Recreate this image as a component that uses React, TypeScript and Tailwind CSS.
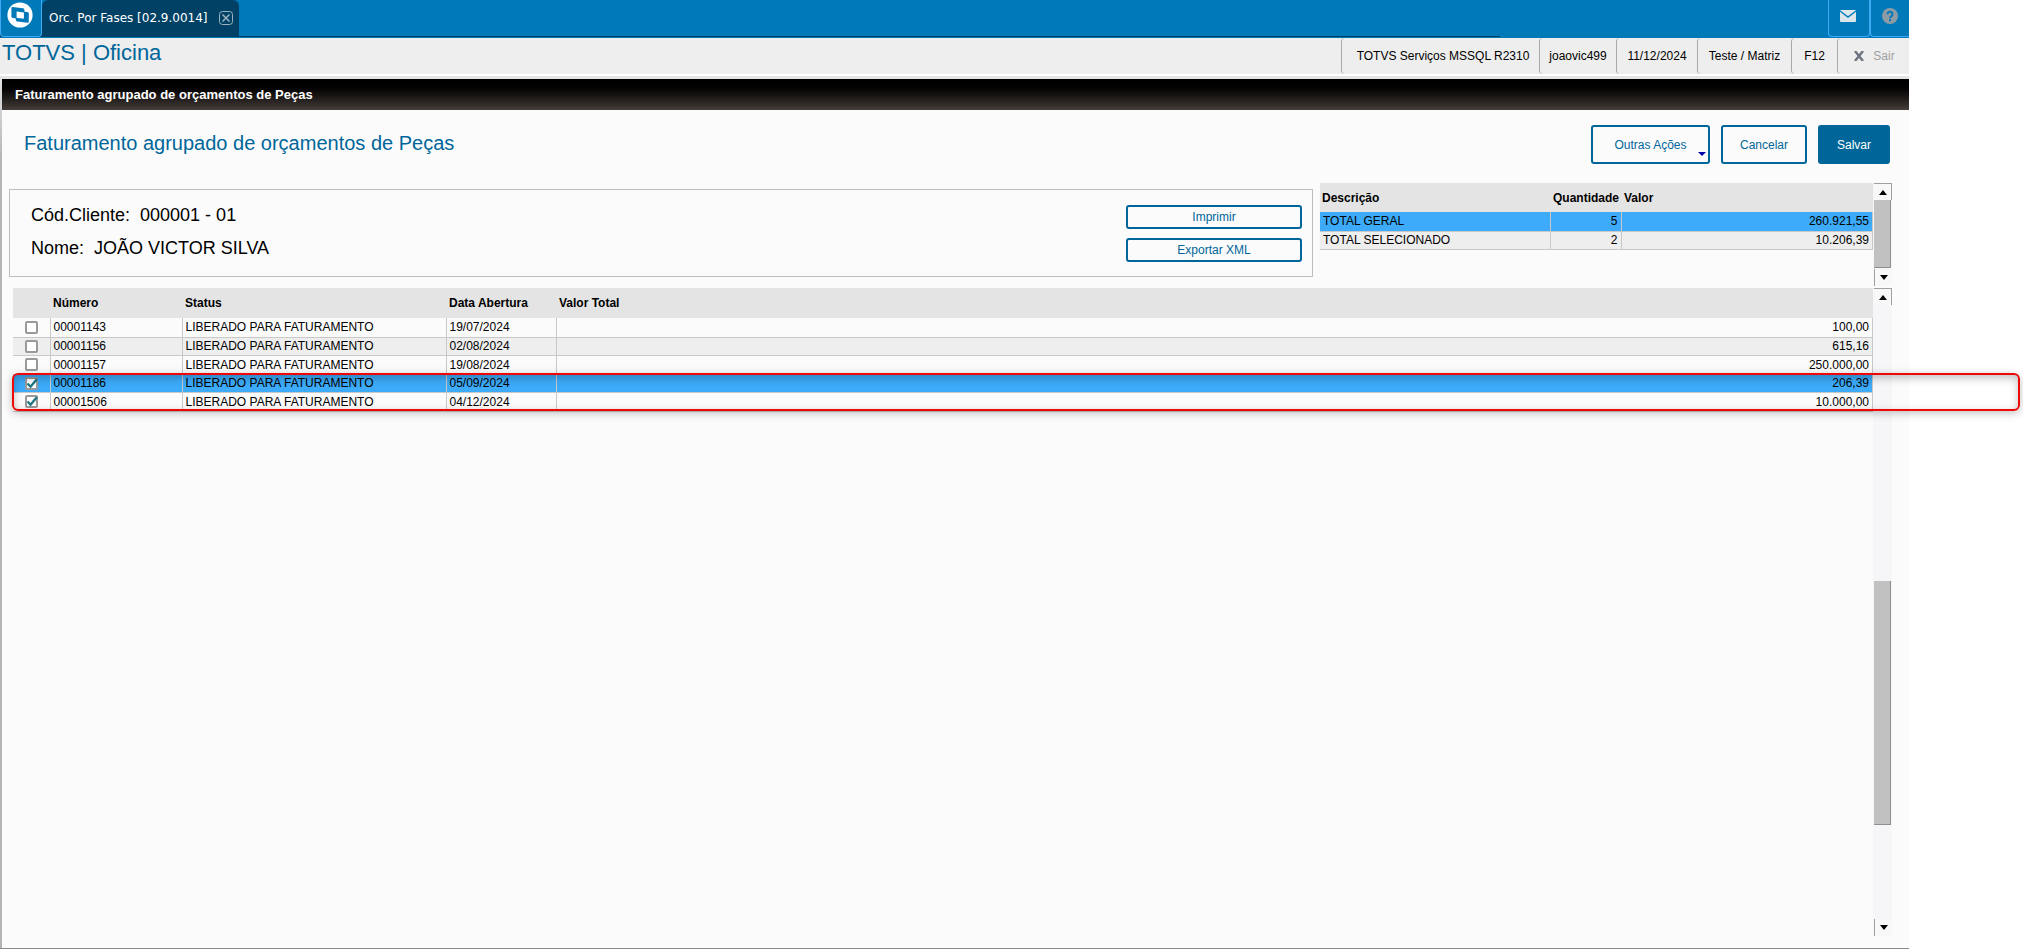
import React from 'react';

interface Order {
  number: string;
  status: string;
  date: string;
  value: string;
  checked: boolean;
  active?: boolean;
}

const ORDERS: Order[] = [
  { number: '00001143', status: 'LIBERADO PARA FATURAMENTO', date: '19/07/2024', value: '100,00', checked: false },
  { number: '00001156', status: 'LIBERADO PARA FATURAMENTO', date: '02/08/2024', value: '615,16', checked: false },
  { number: '00001157', status: 'LIBERADO PARA FATURAMENTO', date: '19/08/2024', value: '250.000,00', checked: false },
  { number: '00001186', status: 'LIBERADO PARA FATURAMENTO', date: '05/09/2024', value: '206,39', checked: true, active: true },
  { number: '00001506', status: 'LIBERADO PARA FATURAMENTO', date: '04/12/2024', value: '10.000,00', checked: true },
];

const TOTALS = [
  { label: 'TOTAL GERAL', count: 5, value: '260.921,55', active: true },
  { label: 'TOTAL SELECIONADO', count: 2, value: '10.206,39', active: false },
];

const Logo = () => (
  <svg className="h-[26px] w-[26px]" viewBox="0 0 26 26">
    <circle cx="13" cy="13" r="12.6" fill="#fff" />
    <path d="M5.500 5l10.500 1.200a1.500 1.500 0 0 1 1.400 1.500v9.800L5.800 16a1.500 1.500 0 0 1-1.400-1.500V6a1 1 0 0 1 1.100-1z" fill="#0079b8" />
    <path d="M8.800 8.800l11.600 1.200a1.500 1.500 0 0 1 1.400 1.500v8.300a1 1 0 0 1-1.200 1L10.200 19.500a1.500 1.500 0 0 1-1.400-1.500z" fill="#0079b8" />
    <path d="M9.600 9.500l7.300.9v6.300l-7.300-.9z" fill="#fff" />
  </svg>
);

const CloseIcon = () => (
  <svg className="h-[14px] w-[14px]" viewBox="0 0 14 14" fill="none" stroke="#9fb3c0">
    <rect x="0.5" y="0.5" width="13" height="13" rx="3" />
    <path d="M3.500 3.500l7 7M10.500 3.500l-7 7" strokeWidth="1.500" />
  </svg>
);

const MailIcon = () => (
  <svg className="h-[12px] w-[16px]" viewBox="0 0 16 12">
    <rect width="16" height="12" rx="1" fill="#dbe6ed" />
    <path d="M0 1l8 6 8-6" fill="none" stroke="#0079b8" strokeWidth="1.400" />
  </svg>
);

const HelpIcon = () => (
  <svg className="h-[16px] w-[16px]" viewBox="0 0 16 16">
    <circle cx="8" cy="8" r="8" fill="#8d9ba5" />
    <path d="M5.500 6.200a2.500 2.500 0 1 1 3.800 2.100c-.9.500-1.300.9-1.300 1.900" fill="none" stroke="#0079b8" strokeWidth="2" />
    <rect x="7" y="11.200" width="2" height="2" fill="#0079b8" />
  </svg>
);

interface ScrollBarProps {
  label: string;
  children: React.ReactNode;
}

const ScrollBar: React.FC<ScrollBarProps> = ({ label, children }) => (
  <div className="flex w-[19px] shrink-0 flex-col bg-[#f6f6f9] pl-px">
    <button type="button" aria-label={`${label} para cima`} className="flex h-[17px] items-center justify-center border-t border-r border-[#a0a0a0] bg-[#f8f8f8]">
      <svg className="h-[5px] w-[8px]" viewBox="0 0 8 5"><path d="M4 0l4 5H0z" /></svg>
    </button>
    {children}
    <button type="button" aria-label={`${label} para baixo`} className="flex h-[17px] items-center justify-center border-l border-[#a0a0a0] bg-[#f8f8f8]">
      <svg className="h-[5px] w-[8px]" viewBox="0 0 8 5"><path d="M4 5l4-5H0z" /></svg>
    </button>
  </div>
);

const RowCheckbox = ({ label, checked }: { label: string; checked: boolean }) => (
  <span className="relative mx-auto block h-[13px] w-[13px]">
    <input
      type="checkbox"
      aria-label={label}
      defaultChecked={checked}
      className="peer block h-[13px] w-[13px] appearance-none rounded-[2px] border-2 border-[#9a9a9a] bg-white"
    />
    <svg className="pointer-events-none absolute inset-0 hidden h-[13px] w-[13px] peer-checked:block" viewBox="0 0 13 13" fill="none" stroke="#1f7a85" strokeWidth="2.400">
      <path d="M2.500 6.500l3 3.200L12 2" />
    </svg>
  </span>
);

const TopBar = () => (
  <header className="flex h-[38px] items-start bg-[#0079b8]">
    <div className="bg-[#004165]">
      <button type="button" aria-label="Menu" className="flex h-[37px] w-[42px] justify-center rounded-b border border-t-0 border-[#3fa9f5] bg-[#0079b8] pt-[2px] pr-[2px]">
        <Logo />
      </button>
    </div>
    <div className="flex h-[37px] w-[197px] items-center justify-between rounded-t-md bg-[#004165] pr-[6px] pb-px pl-[7px]">
      <span className="font-[DejaVu_Sans,sans-serif] text-[12px] whitespace-nowrap text-white">Orc. Por Fases [02.9.0014]</span>
      <button type="button" aria-label="Fechar aba"><CloseIcon /></button>
    </div>
    <div className="mr-[409px] h-[37px] flex-1 border-b border-[#004165]" />
    <div className="-ml-[81px] flex h-[37px]">
      <button type="button" aria-label="Mensagens" className="flex w-[42px] justify-center rounded-b border border-t-0 border-[#3fa9f5] pt-[10px] pr-[2px]">
        <MailIcon />
      </button>
      <button type="button" aria-label="Ajuda" className="flex w-[39px] justify-center rounded-bl border-b border-l border-[#3fa9f5] pt-[8px]">
        <HelpIcon />
      </button>
    </div>
  </header>
);

const InfoBar = () => (
  <div className="flex h-[38px] justify-between border-b-2 border-white bg-[#eee]">
    <h1 className="pl-[2px] text-[22px] leading-[30px] text-[#00669a]">TOTVS | Oficina</h1>
    <div className="flex text-[12px] *:flex *:items-center *:justify-center *:rounded-l *:border-l *:border-[#a8a8a8]">
      <span className="w-[198px] pl-[5px]">TOTVS Serviços MSSQL R2310</span>
      <span className="w-[77px]">joaovic499</span>
      <span className="w-[81px]">11/12/2024</span>
      <span className="w-[94px]">Teste / Matriz</span>
      <span className="w-[46px]">F12</span>
      <button type="button" className="w-[72px] gap-[9px] pl-[2px] text-[#a0a0a0]">
        <svg className="h-[10px] w-[10px]" viewBox="0 0 10 10" stroke="#6b7280" strokeWidth="2.400"><path d="M1 0l8 10M9 0L1 10" /></svg>
        Sair
      </button>
    </div>
  </div>
);

const CustomerPanel = () => (
  <section className="mt-[6px] flex h-[88px] flex-1 justify-between border border-[#bdbdbd] pt-[9px] pr-[10px] pl-[21px]">
    <div className="text-[18px] leading-[33px]">
      <p className="whitespace-pre">Cód.Cliente:  000001 - 01</p>
      <p className="whitespace-pre">Nome:  JOÃO VICTOR SILVA</p>
    </div>
    <div className="flex w-[176px] flex-col gap-[9px] pt-[6px] text-[12px] text-[#00669a]">
      <button type="button" className="h-[24px] rounded-[3px] border-2 border-[#00669a]">Imprimir</button>
      <button type="button" className="h-[24px] rounded-[3px] border-2 border-[#00669a]">Exportar XML</button>
    </div>
  </section>
);

const TotalsPanel = () => (
  <section className="flex h-[103px] w-[572px]">
    <div className="flex-1">
      <table className="w-full table-fixed border-collapse text-[12px] leading-[16px]">
        <thead>
          <tr className="h-[29px] bg-[#e4e4e4] text-left">
            <th className="w-[230px] pl-[2px]">Descrição</th>
            <th className="w-[71px] pl-[3px]">Quantidade</th>
            <th className="pl-[3px]">Valor</th>
          </tr>
        </thead>
        <tbody>
          {TOTALS.map(total => (
            <tr key={total.label} className={`border-b border-[#c8c8c8] odd:h-[19px] even:h-[18px] ${total.active ? 'bg-[#3dabf9]' : 'bg-[#eee]'}`}>
              <td className="border-r border-[#c8c8c8] pl-[3px]">{total.label}</td>
              <td className="border-r border-[#c8c8c8] pr-[3px] text-right">{total.count}</td>
              <td className="border-r border-[#c8c8c8] pr-[3px] text-right">{total.value}</td>
            </tr>
          ))}
        </tbody>
      </table>
    </div>
    <ScrollBar label="Rolar totais">
      <div className="mb-px w-[17px] flex-1 border-r border-b border-[#8f8f8f] bg-[#c1c1c1]" />
    </ScrollBar>
  </section>
);

const OrdersPanel = () => (
  <section className="relative mt-[2px] mr-[17px] mb-[12px] ml-[11px] flex flex-1">
    <div className="flex-1">
      <table className="w-full table-fixed border-collapse text-[12px] leading-[16px]">
        <thead>
          <tr className="h-[30px] bg-[#e4e4e4] text-left">
            <th className="w-[37px]" aria-label="Seleção" />
            <th className="w-[132px] pl-[3px]">Número</th>
            <th className="w-[264px] pl-[3px]">Status</th>
            <th className="w-[110px] pl-[3px]">Data Abertura</th>
            <th className="pl-[3px]">Valor Total</th>
          </tr>
        </thead>
        <tbody>
          {ORDERS.map(order => (
            <tr key={order.number} className={`border-b border-[#c8c8c8] odd:h-[19px] even:h-[18px] ${order.active ? 'bg-[#3dabf9]' : 'even:bg-[#eee]'}`}>
              <td className="border-r border-[#c8c8c8]">
                <RowCheckbox label={`Selecionar ${order.number}`} checked={order.checked} />
              </td>
              <td className="border-r border-[#c8c8c8] pl-[3px]">{order.number}</td>
              <td className="border-r border-[#c8c8c8] pl-[3px]">{order.status}</td>
              <td className="border-r border-[#c8c8c8] pl-[3px]">{order.date}</td>
              <td className="border-r border-[#c8c8c8] pr-[3px] text-right">{order.value}</td>
            </tr>
          ))}
        </tbody>
      </table>
    </div>
    <ScrollBar label="Rolar orçamentos">
      <div className="grow-[276]" />
      <div className="h-[244px] w-[17px] border-r border-b border-[#8f8f8f] bg-[#c1c1c1]" />
      <div className="grow-[94]" />
    </ScrollBar>
    <div className="pointer-events-none absolute top-[85px] -right-[128px] -left-px h-[38px] rounded-[6px] border-2 border-[#f00808] shadow-[0_2px_8px_rgba(0,0,0,0.25),inset_0_3px_8px_rgba(0,0,0,0.25)]" />
  </section>
);

const App: React.FC = () => {
  return (
    <div className="min-h-screen overflow-hidden bg-white pr-[114px] font-[Liberation_Sans,Arial,sans-serif] text-black">
      <div className="flex min-h-screen flex-col">
        <TopBar />
        <InfoBar />
        <main className="flex flex-1 flex-col border-b border-[#888] bg-linear-to-b from-[#e4e4e4] to-[#b4b4b4] to-10% pl-[2px]">
          <div className="-ml-[2px] h-[3px] bg-[#e4e4e4]" />
          <div className="h-[31px] bg-linear-to-b from-black to-[#453e3a] pl-[13px] text-[13px] leading-[31px] font-bold text-white">
            Faturamento agrupado de orçamentos de Peças
          </div>
          <div className="flex flex-1 flex-col bg-[#fbfbfb]">
            <div className="flex h-[73px] justify-between pt-[15px] pr-[19px] pl-[22px]">
              <h2 className="text-[20px] leading-[36px] text-[#00669a]">Faturamento agrupado de orçamentos de Peças</h2>
              <div className="flex h-[39px] gap-[11px] text-[12px] text-[#00669a]">
                <button type="button" className="relative w-[119px] rounded-[3px] border-2 border-[#00669a]">
                  Outras Ações
                  <svg className="absolute right-[2px] bottom-[6px] h-[4px] w-[8px]" viewBox="0 0 8 4" fill="#0000a8"><path d="M0 0h8L4 4z" /></svg>
                </button>
                <button type="button" className="w-[86px] rounded-[3px] border-2 border-[#00669a]">Cancelar</button>
                <button type="button" className="w-[72px] rounded-[3px] bg-[#00669a] text-white">Salvar</button>
              </div>
            </div>
            <div className="flex gap-[7px] pr-[17px] pl-[7px]">
              <CustomerPanel />
              <TotalsPanel />
            </div>
            <OrdersPanel />
          </div>
        </main>
      </div>
    </div>
  );
};

export default App;
